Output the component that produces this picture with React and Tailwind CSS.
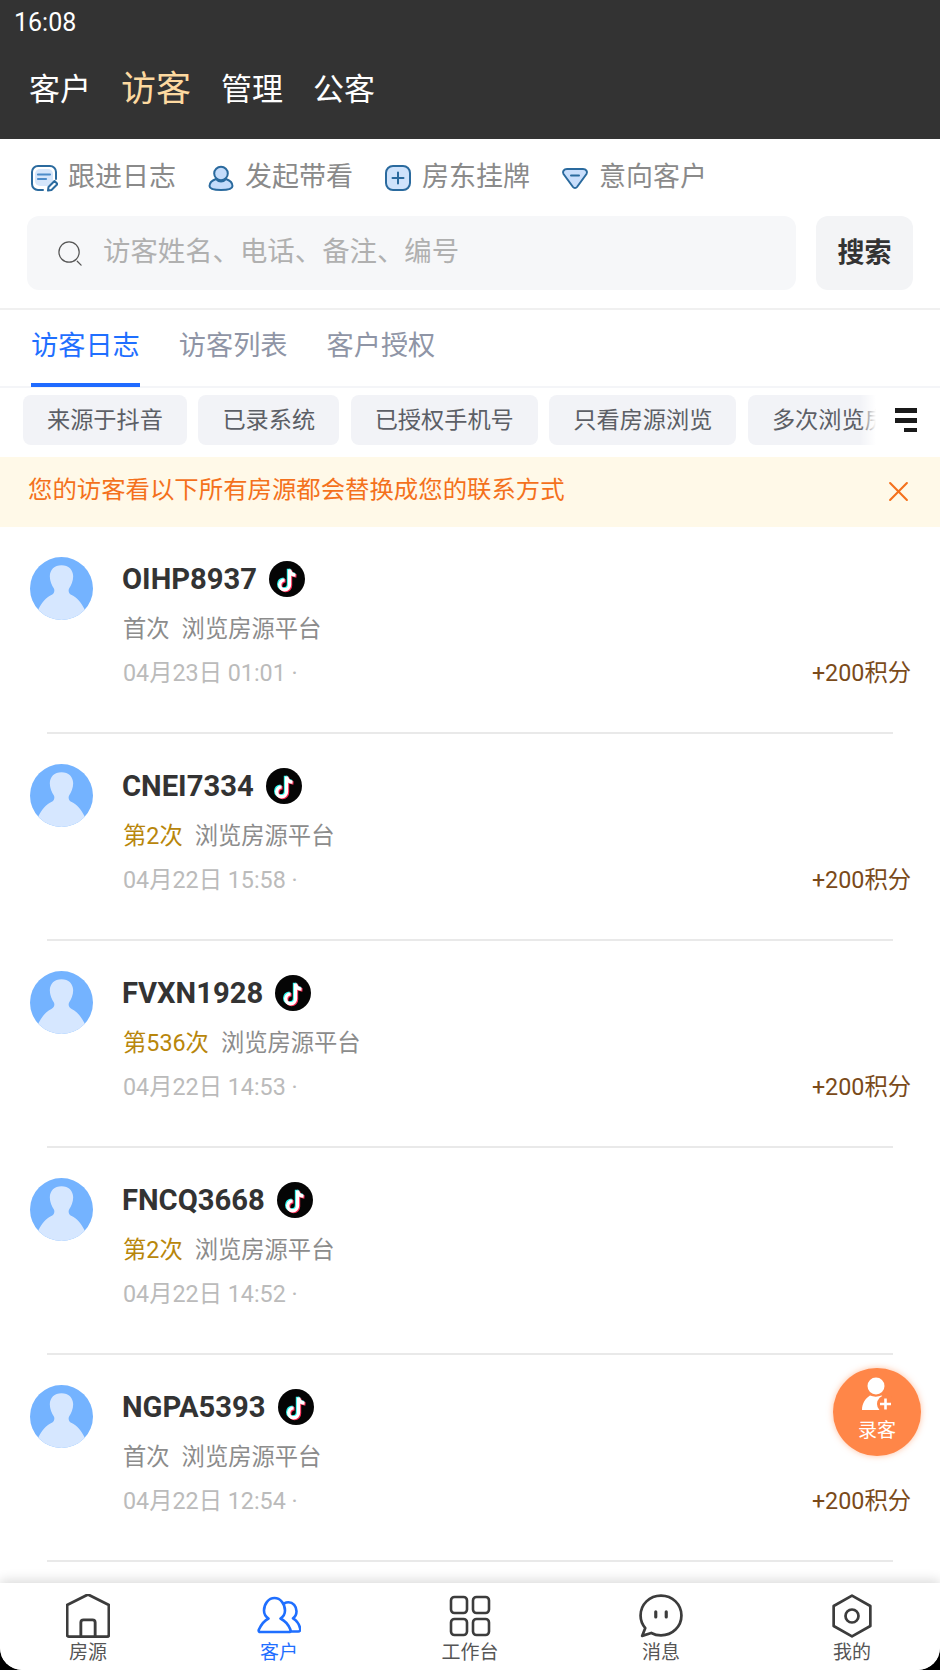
import React from 'react';

const visitors = [
  { name: 'OIHP8937', times: '首次', date: '04月23日 01:01 ·', points: '+200积分' },
  { name: 'CNEI7334', times: '第2次', date: '04月22日 15:58 ·', points: '+200积分' },
  { name: 'FVXN1928', times: '第536次', date: '04月22日 14:53 ·', points: '+200积分' },
  { name: 'FNCQ3668', times: '第2次', date: '04月22日 14:52 ·' },
  { name: 'NGPA5393', times: '首次', date: '04月22日 12:54 ·', points: '+200积分' },
];

const chips = ['来源于抖音', '已录系统', '已授权手机号', '只看房源浏览', '多次浏览房源'];

function Avatar() {
  return (
    <svg viewBox="0 0 62 62" className="w-[63px] h-[63px] shrink-0">
      <defs>
        <clipPath id="avatar-clip"><circle cx="31" cy="31" r="31" /></clipPath>
      </defs>
      <g clipPath="url(#avatar-clip)">
        <rect width="62" height="62" fill="#74b3ff" />
        <path d="M31 8C24 8 19.500 12.500 19.500 19C19.500 24 21.500 28 23.500 31C24.500 33 24 36 21 37.500C16 39.500 11.500 45 8 52V62H54V52C50.500 45 46 39.500 41 37.500C38 36 37.500 33 38.500 31C40.500 28 42.500 24 42.500 19C42.500 12.500 38 8 31 8z" fill="#d6e7ff" />
      </g>
    </svg>
  );
}

function TiktokBadge() {
  const note = 'M20.500 8.500v15.300a4.900 4.900 0 1 1-4.900-4.900M20.500 8.500c.4 3.200 2.700 5.300 6 5.600';
  return (
    <svg viewBox="0 0 36 36" className="w-[36px] h-[36px] shrink-0 mb-[2px]">
      <circle cx="18" cy="18" r="18" fill="#050505" />
      <g fill="none" strokeWidth="3.400" strokeLinecap="butt">
        <path d={note} stroke="#25f4ee" transform="translate(-1 -.8)" />
        <path d={note} stroke="#fe2c55" transform="translate(1 .9)" />
        <path d={note} stroke="#ffffff" />
      </g>
    </svg>
  );
}

function VisitorRow({ visitor }) {
  const firstTime = visitor.times === '首次';
  return (
    <div className="h-[207px] shrink-0 pt-[30px] pl-[30px] pr-[29px] flex flex-col justify-between">
      <div className="flex">
        <Avatar />
        <div className="ml-[30px] flex-1 mt-[1px]">
          <div className="flex items-center gap-[12px] h-[44px] -ml-[1px]">
            <span className="text-[29.200px] font-bold text-[#333333] leading-none">{visitor.name}</span>
            <TiktokBadge />
          </div>
          <div className="flex gap-[12px] text-[23.300px] leading-[30px] mt-[12px]">
            <span className={firstTime ? 'text-[#8c8c8c]' : 'text-[#b8860b]'}>{visitor.times}</span>
            <span className="text-[#8c8c8c]">浏览房源平台</span>
          </div>
          <div className="flex justify-between items-center text-[23.300px] leading-[30px] mt-[14px]">
            <span className="text-[#bbbbbb]">{visitor.date}</span>
            {visitor.points && <span className="text-[#7a4a1a]">{visitor.points}</span>}
          </div>
        </div>
      </div>
      <div className="h-[2px] bg-[#e9e9e9] ml-[17px] mr-[18px]" />
    </div>
  );
}

function ShortcutIcon({ type }) {
  return (
    <svg viewBox="0 0 28 28" className="w-[28px] h-[28px] shrink-0" fill="none" stroke="#2a6a9e" strokeWidth="2" strokeLinecap="round" strokeLinejoin="round">
      {type === 'log' && (
        <>
          <rect x="5" y="5" width="18" height="17" rx="5" fill="#d5e6fb" stroke="none" />
          <path d="M13 26H8a6 6 0 0 1-6-6V8a6 6 0 0 1 6-6h12a6 6 0 0 1 6 6v7" />
          <path d="M8 10.500h12M8 15h8" stroke="#4d8cc9" strokeWidth="2.200" />
          <path d="M18 26.500l.5-3.500 6-6 3 3-6 6-3.500.5z" fill="#fff" />
        </>
      )}
      {type === 'person' && (
        <>
          <path d="M9 15C5 16.500 2.500 19 2.500 22c0 3 3.500 4 11.500 4s11.500-1 11.500-4c0-3-2.500-5.500-6.500-7-1.300 1.500-3 2.500-5 2.500S10.300 16.500 9 15z" fill="#c4dcfb" />
          <circle cx="14" cy="9.500" r="6.800" fill="#c4dcfb" />
        </>
      )}
      {type === 'plus' && (
        <>
          <rect x="2" y="2" width="24" height="24" rx="7" fill="#cfe3fc" />
          <path d="M14 8.500v11M8.500 14h11" />
        </>
      )}
      {type === 'gem' && (
        <>
          <path d="M6 5h16c3 0 5 2.500 3.500 5L16 23c-1 1.300-3 1.300-4 0L2.500 10C1 7.500 3 5 6 5z" fill="#c8defc" />
          <path d="M10 11.500h8" />
        </>
      )}
    </svg>
  );
}

const tabViewBox = {
  home: '2 2 40 40',
  users: '0 0 44 44',
  grid: '0 0 44 44',
  chat: '1 1 42 42',
  hex: '1 1 42 42',
};

function TabIcon({ type, color }) {
  return (
    <svg viewBox={tabViewBox[type]} className="w-[44px] h-[44px]" fill="none" stroke={color} strokeWidth="2.600" strokeLinecap="round" strokeLinejoin="round">
      {type === 'home' && (
        <>
          <path d="M22 2.500L41 12v27c0 1-.7 1.700-1.700 1.700H4.700C3.700 40.700 3 40 3 39V12L22 2.500z" />
          <path d="M15.500 40.500V28c0-1.500 1-2.500 2.500-2.500h8c1.500 0 2.500 1 2.500 2.500v12.500" />
        </>
      )}
      {type === 'users' && (
        <>
          <path d="M3.500 38c-1.500 0-2.200-1-1.700-2.200C4 31 7.500 26.500 11.500 24.500 8.500 22.500 7 19.500 7 16.500 7 10 11.500 4 17.500 4S28 10 28 16.500c0 3-1.500 6-4.500 8 4 2 8 6 10 11.300.5 1.200-.2 2.200-1.700 2.200H3.500z" />
          <path d="M27 9.500c1.500-.8 3-1.200 4.500-1.200 4.500 0 8 4 8 9 0 3-1.300 5.500-3.500 7 3.300 2 6.300 5.700 7.200 10.500.3 1.700-.5 2.700-2 2.700h-8" />
        </>
      )}
      {type === 'grid' && (
        <>
          <rect x="3" y="3" width="16" height="16" rx="3.500" />
          <rect x="25" y="3" width="16" height="16" rx="3.500" />
          <rect x="3" y="25" width="16" height="16" rx="3.500" />
          <rect x="25" y="25" width="16" height="16" rx="3.500" />
        </>
      )}
      {type === 'chat' && (
        <>
          <path d="M22 2.500c11 0 19.500 8.500 19.500 19S33 40.500 22 40.500c-3.500 0-6.500-.8-9.300-2.300L4 41l3-7.500C4.200 30.200 2.500 26 2.500 21.500 2.500 11 11 2.500 22 2.500z" />
          <path d="M17 18v5M27 18v5" strokeWidth="3" />
        </>
      )}
      {type === 'hex' && (
        <>
          <path d="M22 2.500l17.500 10v19L22 41.500l-17.500-10v-19L22 2.500z" />
          <circle cx="22" cy="22" r="6.200" />
        </>
      )}
    </svg>
  );
}

export default function App() {
  const shortcuts = [
    { label: '跟进日志', icon: 'log' },
    { label: '发起带看', icon: 'person' },
    { label: '房东挂牌', icon: 'plus' },
    { label: '意向客户', icon: 'gem' },
  ];
  const tabs = [
    { label: '房源', icon: 'home' },
    { label: '客户', icon: 'users', active: true },
    { label: '工作台', icon: 'grid' },
    { label: '消息', icon: 'chat' },
    { label: '我的', icon: 'hex' },
  ];

  return (
    <div className="w-[940px] h-[1670px] bg-black font-['Roboto','Noto_Sans_CJK_SC',sans-serif]">
      <div className="relative w-full h-full bg-white rounded-b-[22px] overflow-hidden flex flex-col">
        {/* Header */}
        <header className="h-[139px] shrink-0 bg-[#333333] px-[14px] pt-[8px]">
          <div className="text-[25px] leading-[30px] text-white">16:08</div>
          <div className="flex items-center ml-[15px] mt-[27px] h-[50px] text-white">
            <span className="text-[31px]">客户</span>
            <span className="text-[35px] text-[#fdd9a0] ml-[30px]">访客</span>
            <span className="text-[31px] ml-[30px]">管理</span>
            <span className="text-[31px] ml-[30px]">公客</span>
          </div>
        </header>

        {/* Shortcuts */}
        <div className="flex items-center pl-[30px] pt-[15px] h-[62px] shrink-0">
          {shortcuts.map((s) => (
            <div key={s.label} className="flex items-center gap-[10px] mr-[31px]">
              <ShortcutIcon type={s.icon} />
              <span className="text-[27px] text-[#8a8a8a] leading-none">{s.label}</span>
            </div>
          ))}
        </div>

        {/* Search */}
        <div className="flex gap-[20px] pl-[27px] pr-[27px] mt-[15px] h-[74px] shrink-0">
          <div className="flex-1 bg-[#f6f7f9] rounded-[12px] flex items-center pl-[30px]">
            <svg viewBox="0 0 28 28" className="w-[27px] h-[27px]" fill="none" stroke="#555" strokeWidth="1.300" strokeLinecap="round">
              <circle cx="12.500" cy="12.500" r="10.500" />
              <path d="M21 22l4 4" />
            </svg>
            <span className="ml-[19px] text-[27.400px] text-[#b0b0b0]">访客姓名、电话、备注、编号</span>
          </div>
          <div className="w-[97px] bg-[#f3f4f6] rounded-[12px] flex items-center justify-center text-[27px] font-bold text-[#333333]">搜索</div>
        </div>

        <div className="h-[2px] bg-[#f0f0f0] mt-[18px] shrink-0" />

        {/* Tabs */}
        <div className="h-[78px] shrink-0 flex pl-[31px] gap-[39px] border-b-2 border-[#f4f5f8] text-[27.200px]">
          <div className="relative h-full flex items-center pb-[3px] text-[#1f6fff]">
            访客日志
            <div className="absolute left-0 right-0 bottom-[-1px] h-[4px] bg-[#1f6bff]" />
          </div>
          <div className="h-full flex items-center pb-[3px] text-[#8f95a6]">访客列表</div>
          <div className="h-full flex items-center pb-[3px] text-[#8f95a6]">客户授权</div>
        </div>

        {/* Filter chips */}
        <div className="relative h-[69px] shrink-0 pt-[7px] flex">
          <div className="relative w-[876px] overflow-hidden flex gap-[11.500px] pl-[23px]">
            {chips.map((c) => (
              <div key={c} className="h-[50px] shrink-0 px-[24px] bg-[#f2f3f7] rounded-[8px] flex items-center text-[23.200px] text-[#5c5f66]">{c}</div>
            ))}
            <div className="absolute right-0 top-0 w-[16px] h-[50px] bg-gradient-to-r from-white/0 to-white" />
          </div>
          <div className="ml-[17px] mt-[13px] w-[24px] flex flex-col items-end gap-[5px]">
            <div className="h-[5px] w-[22px] bg-[#1a1a1a]" />
            <div className="h-[5px] w-[22px] bg-[#1a1a1a]" />
            <div className="h-[4px] w-[13px] bg-[#1a1a1a]" />
          </div>
        </div>

        {/* Notice */}
        <div className="h-[70px] shrink-0 bg-[#fff9e8] flex items-center justify-between pl-[28px] pr-[31px] pb-[3px]">
          <span className="text-[24.400px] text-[#f4711c]">您的访客看以下所有房源都会替换成您的联系方式</span>
          <svg viewBox="0 0 20 20" className="w-[21px] h-[21px] mt-[2px]" fill="none" stroke="#f4711c" strokeWidth="2" strokeLinecap="round">
            <path d="M2 2l16 16M18 2L2 18" />
          </svg>
        </div>

        {/* Visitor list */}
        <div className="flex-1 min-h-0 overflow-hidden flex flex-col">
          {visitors.map((v) => (
            <VisitorRow key={v.name} visitor={v} />
          ))}
        </div>

        {/* Floating add button */}
        <div className="absolute left-[833px] top-[1368px] w-[88px] h-[88px] rounded-full bg-[#ff8648] shadow-[0_0_6px_rgba(255,134,72,0.5)] flex flex-col items-center pt-[9px]">
          <svg viewBox="0 0 30 34" className="w-[30px] h-[34px]" fill="#fff">
            <circle cx="14" cy="9" r="8.500" />
            <path d="M0 33c0-7 3.500-11.500 8-14.500 3.500 1.500 8 1.500 11.500 0 2 1 3.500 2 4.500 3.500v11H0z" />
            <circle cx="24" cy="27" r="9" fill="#ff8648" />
            <path d="M23.500 21.500v11M18 27h11" stroke="#fff" strokeWidth="2.600" fill="none" />
          </svg>
          <span className="text-[19px] leading-[26px] text-white mt-[7px]">录客</span>
        </div>

        {/* Bottom tab bar */}
        <nav className="relative h-[87px] shrink-0 bg-white rounded-b-[22px] shadow-[0_-3px_12px_rgba(0,0,0,0.14)] flex justify-center">
          {tabs.map((t) => (
            <div key={t.label} className="w-[191px] shrink-0 flex flex-col items-center pt-[11px]">
              <TabIcon type={t.icon} color={t.active ? '#1f6fff' : '#3c3c3c'} />
              <span className={`text-[19px] leading-[24px] mt-[3px] ${t.active ? 'text-[#1f6fff]' : 'text-[#555555]'}`}>{t.label}</span>
            </div>
          ))}
        </nav>
      </div>
    </div>
  );
}
